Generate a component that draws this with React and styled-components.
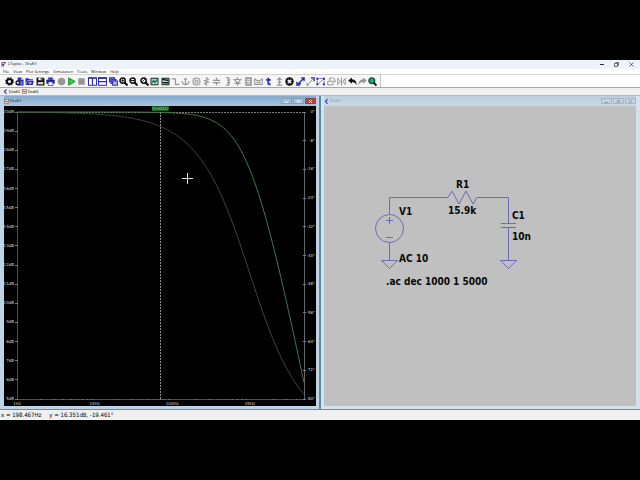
import styled, { createGlobalStyle } from "styled-components";

const GlobalStyle = createGlobalStyle`
    * {
        box-sizing: border-box;
    }
    body {
        margin: 0;
        background-color: #000000;
        font-family: 'Open Sans', 'Noto Sans', sans-serif;
    }
    button {
        font-family: inherit;
        border: none;
        background: none;
        padding: 0;
        margin: 0;
    }
`

const BLUE = '#2a2ab0'
const GRAY = '#969696'
const BLACK = '#0c0c0c'

const menus = ['File', 'View', 'Plot Settings', 'Simulation', 'Tools', 'Window', 'Help']

const lens = <>
    <circle cx="4" cy="4" r="2.9" fill="#ffffff" stroke={BLACK} strokeWidth="1.7" />
    <path d="M6.2 6.2L9.4 9.4" stroke={BLACK} strokeWidth="2.3" />
</>

const doc = <>
    <rect x="0.5" y="0.8" width="9" height="8.4" rx="1" fill="#16352f" />
    <rect x="1.6" y="2" width="6.8" height="6" fill="#b9dccb" />
</>

const tools = [
    { name: 'Configure', art: <>
        <circle cx="5" cy="5" r="2.9" fill="none" stroke={BLACK} strokeWidth="2.2" />
        <circle cx="5" cy="5" r="4.2" fill="none" stroke={BLACK} strokeWidth="1.2" strokeDasharray="1.8 1.5" />
    </> },
    { name: 'New schematic', art: <>
        <path d="M3 0.5H7L9.5 3V9.5H3Z" fill={BLUE} />
        <path d="M7 1L7 3.2H9Z" fill="#ffffff" />
        <circle cx="3.2" cy="6.4" r="2" fill="#ffffff" stroke="#15154a" strokeWidth="1.6" />
        <path d="M5.8 5.6H8.2M6 7.6H8.2" stroke="#ffffff" strokeWidth="0.7" />
    </> },
    { name: 'Open', art: <>
        <path d="M0.5 1.5H4L5 2.6H8.8V4H2.4L0.5 8Z" fill={BLUE} />
        <path d="M2.4 4.4H9.8L8.6 9H0.8Z" fill={BLUE} />
        <path d="M5.6 5.2L7 6.6L5.6 8M3.6 6.6H6.8" stroke="#ffffff" strokeWidth="0.8" fill="none" />
    </> },
    { name: 'Save', art: <>
        <path d="M0.6 0.6H8L9.4 2V9.4H0.6Z" fill={BLACK} />
        <path d="M2.6 0.6H7V3.6H2.6Z" fill="#ffffff" />
        <path d="M5.2 1H6.4V3H5.2Z" fill={BLACK} />
        <path d="M2 5.6H8V8.2H2Z" fill="#d8d8d8" />
    </> },
    { name: 'Print', art: <>
        <path d="M2.4 0.6H7.6V3H2.4Z" fill={BLUE} />
        <path d="M0.4 3H9.6V7.4H0.4Z" fill="#1c1c80" />
        <path d="M2.4 5.4H7.6V9.4H2.4Z" fill="#ffffff" stroke={BLUE} strokeWidth="0.8" />
    </> },
    { name: 'Pause', art: <circle cx="5" cy="5" r="4.2" fill={GRAY} /> },
    { name: 'Run', art: <path d="M1.8 0.9L9 5L1.8 9.1Z" fill="#23d63b" stroke="#128a24" strokeWidth="1" /> },
    { name: 'Halt', art: <rect x="1.4" y="1.4" width="7.2" height="7.2" fill={GRAY} /> },
    { name: 'Tile vertically', art: <>
        <rect x="0.6" y="0.8" width="8.8" height="8.4" fill="#ffffff" stroke={BLUE} strokeWidth="1.1" />
        <path d="M0.6 1.4H9.4M5 1V9" stroke={BLUE} strokeWidth="1.3" />
    </> },
    { name: 'Tile horizontally', art: <>
        <rect x="0.6" y="0.8" width="8.8" height="8.4" fill="#ffffff" stroke={BLUE} strokeWidth="1.1" />
        <path d="M0.6 1.4H9.4M0.6 5.2H9.4" stroke={BLUE} strokeWidth="1.5" />
    </> },
    { name: 'Cascade', art: <>
        <rect x="0.6" y="0.8" width="5.6" height="4.6" fill="#7a7ad4" stroke={BLUE} />
        <rect x="2.2" y="2.6" width="5.6" height="4.6" fill="#7a7ad4" stroke={BLUE} />
        <rect x="3.8" y="4.4" width="5.6" height="4.8" fill="#aaaaf0" stroke={BLUE} />
    </> },
    { name: 'Zoom in', art: <>{lens}<path d="M2.4 4H5.6M4 2.4V5.6" stroke={BLACK} strokeWidth="0.9" /></> },
    { name: 'Zoom out', art: <>{lens}<path d="M2.3 4H5.7" stroke={BLACK} strokeWidth="1.3" /></> },
    { name: 'Zoom back', art: <>{lens}<path d="M2.4 5.4L5.4 2.4" stroke={BLACK} strokeWidth="0.9" /></> },
    { name: 'Autorange', art: <>{doc}<path d="M1.8 6.8L4 4L5.6 6L8.2 2.6" stroke="#1c6b45" strokeWidth="1.4" fill="none" /></> },
    { name: 'Zoom to fit', art: <>{doc}<path d="M1.6 3C4 2.2 5.6 4.4 8.4 3.4M1.6 6.6C4 5.2 6 7.6 8.4 6" stroke={BLACK} strokeWidth="1.5" fill="none" /></> },
    { name: 'Wire', art: <path d="M0.8 2H5V8.2H9.2" stroke={GRAY} strokeWidth="1.3" fill="none" /> },
    { name: 'Ground', art: <path d="M5 0.8V8.8M1 4.8L2 7Q5 10 8 7L9 4.8M3.4 2.4H6.6" stroke={GRAY} strokeWidth="1.3" fill="none" /> },
    { name: 'Label net', art: <>
        <circle cx="5" cy="5" r="3.9" stroke={GRAY} strokeWidth="1.2" fill="none" />
        <circle cx="5" cy="5" r="1.6" stroke={GRAY} strokeWidth="1.2" fill="none" />
    </> },
    { name: 'Resistor', art: <path d="M5 0.4V1.6L7 2.8L3 4.2L7 5.8L3 7.2L5 8.4V9.6" stroke={GRAY} strokeWidth="1.4" fill="none" /> },
    { name: 'Capacitor', art: <path d="M5 0.8V3.8M5 6.2V9.2M1 3.8H9M1 6.2H9" stroke={GRAY} strokeWidth="1.4" fill="none" /> },
    { name: 'Inductor', art: <path d="M3.4 0.8C8 0.6 8 3.6 4.4 3.6C8 3.6 8 6.4 4.4 6.4C8 6.4 8 9.4 3.4 9.2" stroke={GRAY} strokeWidth="1.4" fill="none" /> },
    { name: 'Diode', art: <path d="M5 0.4V3M1.4 2.8H8.6L5 6.8ZM1.6 7H8.4M5 7V9.6" stroke={GRAY} strokeWidth="1.3" fill="none" /> },
    { name: 'Component', art: <>
        <path d="M1 1.2H9M1 8.8H9M0.8 3.6H9.2M0.8 6.4H9.2" stroke={GRAY} strokeWidth="1.2" />
        <rect x="2.4" y="1.2" width="5.2" height="7.6" fill="none" stroke={GRAY} strokeWidth="1.4" />
    </> },
    { name: 'Bus tap', art: <path d="M0.8 1.8V8.2H9.2V1.8L6.8 4H3.2L0.8 1.8M2.8 6.2H7.2" stroke={GRAY} strokeWidth="1.2" fill="none" /> },
    { name: 'Text', art: <path d="M4.8 0.8V7.2Q4.8 8.4 7.4 8M2.4 3.2H7.4" stroke={BLUE} strokeWidth="2" fill="none" /> },
    { name: 'SPICE directive', art: <path d="M5 1V8.8M2.6 3.4L5 1L7.4 3.4M3 5.6H7M1.8 9H8.2" stroke={GRAY} strokeWidth="1.3" fill="none" /> },
    { name: 'Delete', art: <>
        <circle cx="5" cy="5" r="4.7" fill={BLACK} />
        <path d="M3 3L7 7M7 3L3 7" stroke="#ffffff" strokeWidth="1.5" />
    </> },
    { name: 'Move', art: <path d="M1 9L9 1M1 5.4V9H4.6M5.6 1H9V4.4M3 7L5.6 7.6" stroke={BLUE} strokeWidth="1.5" fill="none" /> },
    { name: 'Duplicate', art: <>
        <path d="M1 9L8 2M1 6.4V9H3.6" stroke="#8c8cb4" strokeWidth="1.1" fill="none" />
        <path d="M5.4 1H9V4.6" stroke={BLUE} strokeWidth="1.5" fill="none" />
    </> },
    { name: 'Stretch', art: <>
        <path d="M1 1.6H9V8.8M2 8.4L8 2.4M1.6 1.6V8.8" stroke="#5656b4" strokeWidth="1" strokeDasharray="2 0.7" fill="none" />
        <path d="M0.4 0.8H2.6V3H0.4ZM7.6 0.8H9.8V3H7.6ZM7.6 7H9.8V9.2H7.6ZM0.4 7H2.6V9.2H0.4Z" fill={BLUE} />
    </> },
    { name: 'Rotate', art: <path d="M0.8 8.8H6.6V4.8H0.8ZM3 4.4V1.2H7Q9.2 1.4 8.8 4.8M7.4 4L8.8 5.6L9.8 4" stroke={GRAY} strokeWidth="1.1" fill="none" /> },
    { name: 'Mirror', art: <path d="M5 0.6V9.4M0.8 1.6V8.4L3.8 5ZM9.2 1.6V8.4L6.2 5Z" stroke={GRAY} strokeWidth="1.1" fill="none" /> },
    { name: 'Undo', art: <path d="M0.2 4L4.4 0.6V2.6Q9.6 2.8 9.4 9.2Q7.8 5.6 4.4 5.6V7.4Z" fill={BLACK} /> },
    { name: 'Redo', art: <path d="M9.8 4L5.6 0.6V2.6Q0.4 2.8 0.6 9.2Q2.2 5.6 5.6 5.6V7.4Z" fill={GRAY} /> },
    { name: 'Search', art: <>
        <circle cx="4.2" cy="4.2" r="3.2" fill="#25a578" stroke="#124f3c" strokeWidth="1.5" />
        <path d="M6.4 6.4L9.4 9.4" stroke={BLACK} strokeWidth="2" />
    </> },
]

// first order low pass, R = 15.9k and C = 10n
const CUTOFF = 1 / (2 * Math.PI * 15900 * 10e-9)
const LAST_DECADE = Math.log10(5000)
const plot = { left: 13, top: 6, size: 287 }

function freqX(freq){
    return plot.left + (Math.log10(freq) / LAST_DECADE) * plot.size
}
function gainY(db){
    return plot.top + ((20 - db) / 15) * plot.size
}
function phaseY(deg){
    return plot.top + (-deg / 80) * plot.size
}
function trace(toY){
    const points = []
    for (let i = 0; i <= 200; i++) {
        const freq = 10 ** ((i / 200) * LAST_DECADE)
        points.push(`${freqX(freq).toFixed(2)},${toY(freq / CUTOFF).toFixed(2)}`)
    }
    return points.join(' ')
}

const gainTrace = trace(r => gainY(20 - 10 * Math.log10(1 + r * r)))
const phaseTrace = trace(r => phaseY(-Math.atan(r) * 180 / Math.PI))
const gains = Array.from({ length: 16 }, (_, i) => 20 - i)
const phases = Array.from({ length: 11 }, (_, i) => -8 * i)
const decades = [[1, '1Hz'], [10, '10Hz'], [100, '100Hz'], [1000, '1KHz']]
const minorTicks = [1, 10, 100, 1000]
    .flatMap(d => [2, 3, 4, 5, 6, 7, 8, 9].map(n => n * d))
    .filter(f => f <= 5000)

function Waveform(){
    const right = plot.left + plot.size
    const bottom = plot.top + plot.size
    return(
        <Drawing viewBox="0 0 312 300" role="img" aria-label="V(n002) gain and phase">
            <rect width="312" height="300" fill="#000000" />
            <g stroke="#7c7c7c" shapeRendering="crispEdges">
                <path d={`M${plot.left} ${plot.top}V${bottom}H${right}`} fill="none" stroke="#505050" />
                <path d={`M${right} ${plot.top}V${bottom}`} stroke="#666666" />
                <path d={`M${plot.left} ${plot.top}H${right}`} strokeDasharray="2 1" />
                {gains.map(db => <path key={db} d={`M${plot.left - 2} ${gainY(db)}h3`} />)}
                {phases.map(deg => <path key={deg} d={`M${right - 1} ${phaseY(deg)}h3`} />)}
                {minorTicks.map(f => <path key={f} d={`M${freqX(f)} ${bottom}v1`} />)}
            </g>
            <path d={`M156.5 ${plot.top}V${bottom}`} stroke="#8c8c8c" strokeDasharray="2 1" />
            <polyline points={phaseTrace} fill="none" stroke="#3e463e" />
            <polyline points={gainTrace} fill="none" stroke="#437a48" />
            <path d="M178 72.5H189M183.5 67V78" stroke="#e6e6e6" />
            <rect x="148" y="0" width="17" height="5" fill="#14561f" />
            <TraceName x="156" y="4">V(n002)</TraceName>
            {gains.map(db => <AxisLabel key={db} x="10" y={gainY(db) + 1} $anchor="end">{db}dB</AxisLabel>)}
            {phases.map(deg => <AxisLabel key={deg} x="311" y={phaseY(deg) + 1} $anchor="end">{deg}°</AxisLabel>)}
            {decades.map(([f, label]) => <AxisLabel key={f} x={freqX(f)} y="299" $anchor="middle">{label}</AxisLabel>)}
        </Drawing>
    )
}

function Schematic(){
    return(
        <Drawing viewBox="0 0 312 300" role="img" aria-label="RC low pass schematic">
            <rect width="312" height="300" fill="#c0c0c0" />
            <g fill="none" stroke="#6c6cb4">
                <path d="M65.5 108V91.5H124L128 85L135 98L142 85L149 98L153 91.5H184.5V117.5" />
                <circle cx="65.5" cy="122.5" r="14" />
                <path d="M62 114.5H69M65.5 111V118M62 131.5H69" />
                <path d="M65.5 136.5V154.5M57.5 154.5H73.5L65.5 162.5Z" />
                <path d="M177 117.5H192M177 121.5H192M184.5 121.5V154.5M176.5 154.5H192.5L184.5 162.5Z" />
            </g>
            <PartText x="132" y="82">R1</PartText>
            <PartText x="124" y="108">15.9k</PartText>
            <PartText x="75" y="109">V1</PartText>
            <PartText x="75" y="156">AC 10</PartText>
            <PartText x="188" y="113">C1</PartText>
            <PartText x="188" y="134">10n</PartText>
            <PartText x="62" y="179">.ac dec 1000 1 5000</PartText>
        </Drawing>
    )
}

function WaveIcon(){
    return(
        <SmallIcon viewBox="0 0 10 10">
            <rect x="0.5" y="1" width="9" height="8" fill="#ffffff" stroke="#5a4a4a" />
            <path d="M1.4 7L3.6 3L6 7L8.6 3" stroke="#c02828" strokeWidth="1.6" fill="none" />
        </SmallIcon>
    )
}

function SchematicIcon(){
    return(
        <SmallIcon viewBox="0 0 10 10">
            <path d="M7 0.6L3 5L7 9.4" stroke={BLUE} strokeWidth="2.2" fill="none" />
        </SmallIcon>
    )
}

function ChildWindow({ title, icon, active, children }){
    return(
        <Child $active={active}>
            <ChildTitle $active={active}>
                {icon}
                <ChildName $active={active}>{title}</ChildName>
                <ChildButton aria-label="Minimize" $active={active}>
                    <svg viewBox="0 0 10 5" width="10" height="5"><path d="M3 3.5H7" stroke="currentColor" /></svg>
                </ChildButton>
                <ChildButton aria-label="Maximize" $active={active}>
                    <svg viewBox="0 0 10 5" width="10" height="5"><path d="M3.5 1.5H6.5V3.5H3.5Z" stroke="currentColor" fill="none" strokeWidth="0.8" /></svg>
                </ChildButton>
                <ChildButton aria-label="Close" $active={active} $close>
                    <svg viewBox="0 0 10 5" width="10" height="5"><path d="M3.5 1L6.5 4M6.5 1L3.5 4" stroke="currentColor" /></svg>
                </ChildButton>
            </ChildTitle>
            {children}
        </Child>
    )
}

export default function App(){
    return(
        <Screen>
            <GlobalStyle />
            <Frame>
                <TitleBar>
                    <SmallIcon viewBox="0 0 10 10">
                        <path d="M2 9.5V1H9L6 5H2M6 5L4 9" stroke="#4a2038" strokeWidth="1.5" fill="none" />
                    </SmallIcon>
                    <AppName>LTspice - Draft1</AppName>
                    <TitleButton aria-label="Minimize"><svg viewBox="0 0 5 5" width="5" height="5"><path d="M1 2.5H5" stroke="#303030" /></svg></TitleButton>
                    <TitleButton aria-label="Restore"><svg viewBox="0 0 5 5" width="5" height="5"><path d="M0.5 1.5H3.5V4.5H0.5ZM1.5 0.5H4.5V3.5" stroke="#303030" strokeWidth="0.7" fill="none" /></svg></TitleButton>
                    <TitleButton aria-label="Close"><svg viewBox="0 0 5 5" width="5" height="5"><path d="M0.5 0.5L4.5 4.5M4.5 0.5L0.5 4.5" stroke="#303030" strokeWidth="0.7" /></svg></TitleButton>
                </TitleBar>
                <MenuBar>
                    {menus.map(name => <MenuButton key={name}>{name}</MenuButton>)}
                </MenuBar>
                <ToolBar>
                    <Tools>
                        {tools.map(tool => (
                            <ToolButton key={tool.name} aria-label={tool.name}>
                                <svg viewBox="0 0 10 10" width="9" height="9">{tool.art}</svg>
                            </ToolButton>
                        ))}
                    </Tools>
                </ToolBar>
                <Tabs>
                    <Tab><SchematicIcon />Draft1</Tab>
                    <Tab><WaveIcon />Draft1</Tab>
                </Tabs>
                <Workspace>
                    <ChildWindow title="Draft1" icon={<WaveIcon />} active>
                        <Waveform />
                    </ChildWindow>
                    <ChildWindow title="Draft1" icon={<SchematicIcon />}>
                        <Schematic />
                    </ChildWindow>
                </Workspace>
                <StatusBar>
                    <span>x = 198.467Hz</span>
                    <span>y = 16.351dB, -19.461°</span>
                </StatusBar>
            </Frame>
        </Screen>
    )
}

const Screen = styled.div`
    min-height: 100vh;
    display: flex;
    flex-direction: column;
    justify-content: center;
    background-color: #000000;
`
const Frame = styled.main`
    width: 100%;
    background-color: #f0f0f0;
`
const TitleBar = styled.header`
    height: 9px;
    display: flex;
    align-items: center;
    gap: 2px;
    padding: 0 2px 1px 1px;
    background-color: #eef3f9;
`
const AppName = styled.h1`
    flex: 1;
    margin: 0;
    font-size: 4px;
    line-height: 8px;
    font-weight: 400;
    color: #000000;
`
const TitleButton = styled.button`
    width: 13px;
    height: 8px;
    display: flex;
    align-items: center;
    justify-content: center;
`
const MenuBar = styled.nav`
    display: flex;
    gap: 4px;
    padding-left: 3px;
    background-color: #ffffff;
    border-bottom: 1px solid #d2d2d2;
`
const MenuButton = styled.button`
    font-size: 4px;
    line-height: 5px;
    color: #000000;
`
const ToolBar = styled.div`
    display: flex;
    background-color: #ffffff;
    border-bottom: 1px solid #a6a6a6;
`
const Tools = styled.div`
    width: 381px;
    height: 12px;
    display: grid;
    grid-template-columns: repeat(36, 1fr);
    padding: 0 2px 0 4px;
    background-color: #f6f6f6;
    border-right: 1px solid #c4c4c4;
`
const ToolButton = styled.button`
    display: flex;
    align-items: center;
    justify-content: center;
`
const Tabs = styled.div`
    height: 8px;
    display: flex;
    gap: 2px;
    padding-left: 3px;
    border-bottom: 1px solid #b4bcc4;
`
const Tab = styled.button`
    display: flex;
    align-items: center;
    gap: 1px;
    font-family: 'Liberation Sans', sans-serif;
    font-size: 4px;
    line-height: 7px;
    color: #000000;
`
const SmallIcon = styled.svg`
    width: 5px;
    height: 5px;
    flex: none;
`
const Workspace = styled.div`
    display: grid;
    grid-template-columns: 1fr 1fr;
    gap: 2px;
    background-color: #5f8ba0;
    border-bottom: 1px solid #5f929c;
`
const Child = styled.section`
    background-color: ${props => props.$active ? '#bfd3e6' : '#d5e2ee'};
    padding: ${props => props.$active ? '0 3px 3px 4px' : '0 4px 3px 3px'};
`
const ChildTitle = styled.div`
    height: 10px;
    display: flex;
    align-items: center;
    gap: 1px;
    background: ${props => props.$active
        ? 'linear-gradient(#86abcd, #a9c5e2)'
        : 'linear-gradient(#bccddd, #cbdae8)'};
`
const ChildName = styled.h2`
    flex: 1;
    margin: 0;
    font-size: 4px;
    line-height: 8px;
    font-weight: 400;
    color: ${props => props.$active ? '#0c1a2a' : '#7c8a9a'};
`
const ChildButton = styled.button`
    width: 11px;
    height: 6px;
    display: flex;
    align-items: center;
    justify-content: center;
    color: ${props => props.$close && props.$active ? '#ffffff' : props.$active ? '#f4f8fc' : '#8292a2'};
    background-color: ${props => props.$close && props.$active ? '#b8453c' : props.$active ? '#a6c0d8' : '#c6d4e2'};
    border: 1px solid ${props => props.$close && props.$active ? '#8c4a50' : props.$active ? '#86a0ba' : '#a6b6c6'};
`
const Drawing = styled.svg`
    display: block;
    width: 100%;
    height: auto;
`
const AxisLabel = styled.text`
    font-family: 'DejaVu Sans', sans-serif;
    font-size: 4px;
    fill: #dcdcdc;
    text-anchor: ${props => props.$anchor};
`
const TraceName = styled.text`
    font-family: 'DejaVu Sans', sans-serif;
    font-size: 4px;
    fill: #8cff9a;
    text-anchor: middle;
`
const PartText = styled.text`
    font-family: 'DejaVu Sans Condensed', 'DejaVu Sans', sans-serif;
    font-size: 10px;
    font-weight: 700;
    fill: #080808;
`
const StatusBar = styled.footer`
    display: flex;
    gap: 8px;
    padding-left: 1px;
    font-family: 'DejaVu Sans Condensed', 'DejaVu Sans', sans-serif;
    font-size: 6px;
    line-height: 10px;
    color: #000000;
    background-color: #f0f0f0;
`
